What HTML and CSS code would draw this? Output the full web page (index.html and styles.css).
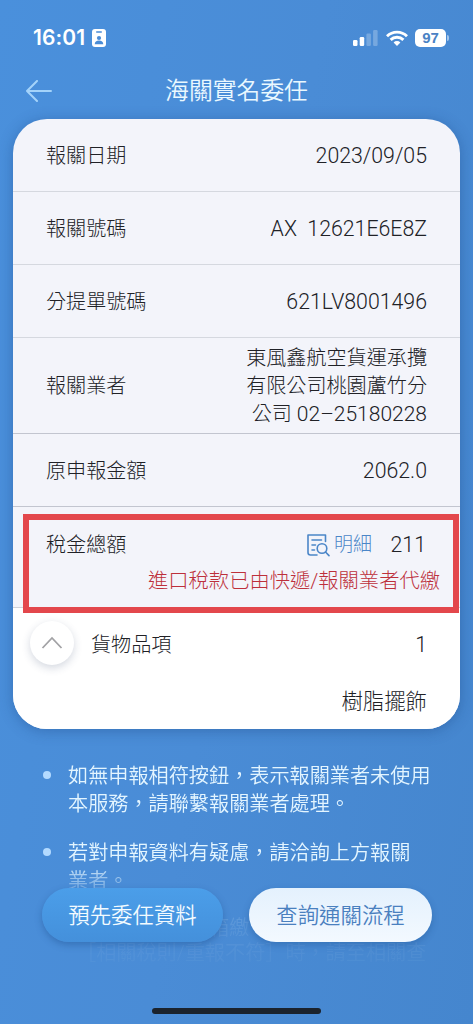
FILE: index.html
```html
<!DOCTYPE html>
<html lang="zh-Hant">
<head>
<meta charset="utf-8">
<meta name="viewport" content="width=device-width, initial-scale=1">
<title>海關實名委任</title>
<link rel="stylesheet" href="styles.css">
</head>
<body>
<main class="screen">
  <div class="status">
    <div class="status-left">
      <span class="time">16:01</span>
      <svg class="badge-icon" width="14" height="18" viewBox="0 0 14 18">
        <rect width="14" height="18" rx="3" fill="#fff"/>
        <rect x="4" y="2.2" width="6" height="1.5" rx=".7" fill="#4a8cd6"/>
        <circle cx="7" cy="9" r="2.1" fill="#4a8cd6"/>
        <path d="M2.7 15.3c.2-2.6 1.7-3.7 4.3-3.7s4.100 1.100 4.300 3.700z" fill="#4a8cd6"/>
      </svg>
    </div>
    <div class="status-right">
      <svg width="26" height="18" viewBox="0 0 26 18" fill="#fff">
        <rect x="0" y="11" width="4.500" height="6" rx="1.200"/>
        <rect x="6.700" y="8" width="4.500" height="9" rx="1.200"/>
        <rect x="13.400" y="4.500" width="4.500" height="12.500" rx="1.200" opacity=".25"/>
        <rect x="20.100" y="1" width="4.500" height="16" rx="1.200" opacity=".25"/>
      </svg>
      <svg width="22" height="18" viewBox="0 0 22 18" fill="none" stroke="#fff" stroke-width="2.900">
        <path d="M1 7.200a14.200 14.200 0 0 1 20 0"/>
        <path d="M4.600 10.900a9.100 9.100 0 0 1 12.800 0"/>
        <path d="M11 17l-3.400-3.500a4.800 4.800 0 0 1 6.800 0z" fill="#fff" stroke="none"/>
      </svg>
      <div class="battery"><span class="battery-level">97</span><span class="battery-tip"></span></div>
    </div>
  </div>

  <header class="nav">
    <svg width="26" height="22" viewBox="0 0 26 22" fill="none" stroke="#a4d3fa" stroke-width="2" stroke-linecap="round" stroke-linejoin="round">
      <path d="M25 11H1M11 1L1 11l10 10"/>
    </svg>
    <h1 class="title">海關實名委任</h1>
  </header>

  <section class="card">
    <div class="row"><span>報關日期</span><span class="value">2023/09/05</span></div>
    <div class="row"><span>報關號碼</span><span class="value spaced">AX  12621E6E8Z</span></div>
    <div class="row"><span>分提單號碼</span><span class="value">621LV8001496</span></div>
    <div class="row tall"><span>報關業者</span><span class="value company">東風鑫航空貨運承攬<br>有限公司桃園蘆竹分<br>公司 <span class="phone">02–25180228</span></span></div>
    <div class="row"><span>原申報金額</span><span class="value">2062.0</span></div>
    <div class="tax">
      <div class="tax-line">
        <span>稅金總額</span>
        <a class="detail">
          <svg width="23" height="23" viewBox="0 0 23 23" fill="none" stroke="#4b86c8" stroke-width="1.600" stroke-linecap="round" stroke-linejoin="round">
            <path d="M10 21H3.500Q1 21 1 18.500V1H18.500V7.500"/>
            <path d="M5 6H14.500M5 11H8.500M5 16H7.500"/>
            <circle cx="15" cy="14.500" r="4.800"/>
            <path d="M18.500 18L22 21.600"/>
          </svg>
          <span>明細</span>
        </a>
        <span class="value amount">211</span>
      </div>
      <p class="tax-note">進口稅款已由快遞/報關業者代繳</p>
      <div class="highlight"></div>
    </div>
    <div class="items">
      <div class="items-head">
        <button class="toggle" aria-label="收合">
          <svg width="22" height="13" viewBox="0 0 22 13" fill="none" stroke="#a2a2a5" stroke-width="1.800"><path d="M1.500 12L11 2l9.500 10"/></svg>
        </button>
        <span class="items-label">貨物品項</span>
        <span class="value count">1</span>
      </div>
      <div class="item-name">樹脂擺飾</div>
    </div>
  </section>

  <ul class="notes">
    <li>如無申報相符按鈕，表示報關業者未使用<br>本服務，請聯繫報關業者處理。</li>
    <li>若對申報資料有疑慮，請洽詢上方報關<br>業者。</li>
    <li class="last"><span class="tail">箱繳</span><span>［相關稅則/重報不符］時，請至相關查</span></li>
  </ul>

  <footer class="actions">
    <button class="btn btn-blue">預先委任資料</button>
    <button class="btn btn-light">查詢通關流程</button>
  </footer>
  <div class="home-bar"></div>
</main>
</body>
</html>
```
FILE: styles.css
```css
* { box-sizing: border-box; }
body { margin: 0; }

.screen {
  position: relative;
  display: flex;
  flex-direction: column;
  width: 473px;
  height: 1024px;
  overflow: hidden;
  background: linear-gradient(100deg, #4a90dc 0%, #4a8cd6 50%, #4586ce 100%);
  color: #202126;
  font-family: Roboto, "Noto Sans CJK TC", sans-serif;
  font-size: 20.1px;
  font-weight: 300;
  line-height: 28px;
}

button {
  border: 0;
  padding: 0;
  font: inherit;
}

.status {
  display: flex;
  justify-content: space-between;
  height: 67px;
  padding: 28px 24px 0 33px;
  color: #fff;
}
.status-left,
.status-right { display: flex; align-items: center; height: 19px; }
.time { font: 600 21px/19px Inter, sans-serif; letter-spacing: 0.1px; }
.badge-icon { margin-left: 7px; }
.status-right { gap: 7px; }
.battery { display: flex; align-items: center; gap: 1px; }
.battery-level {
  width: 31px;
  height: 18px;
  border-radius: 5px;
  background: #fff;
  color: #4a82c4;
  font: 700 15px/18px "Liberation Sans", sans-serif;
  text-align: center;
}
.battery-tip { width: 2px; height: 6px; border-radius: 0 2px 2px 0; background: #a5c6eb; }

.nav {
  display: grid;
  grid-template-columns: 26px 1fr 26px;
  align-items: center;
  height: 52px;
  padding: 0 26px 4px;
}
.title {
  margin: 0;
  color: #eaf8ff;
  font-size: 23.8px;
  font-weight: 350;
  text-align: center;
}

.card {
  height: 610px;
  margin: 0 13px;
  border-radius: 34px;
  background: #f3f4fa;
  box-shadow: 0 2px 14px rgba(20, 60, 120, .35);
}
.row {
  display: flex;
  align-items: center;
  justify-content: space-between;
  height: 73px;
  padding: 1px 33px 0;
  border-bottom: 1px solid #d5d8df;
}
.row.tall { height: 96px; border-color: #c2c5cf; }
.row.tall + .row { border-color: #c2c5cf; }
.value { font-size: 21.3px; text-align: right; }
.spaced { white-space: pre; }
.value.company { font-size: 20.1px; }
.phone { font-size: 21px; }

.tax {
  position: relative;
  height: 101px;
  padding: 22px 20px 0 33px;
  border-bottom: 1px solid #d0d3da;
}
.tax-line { display: flex; align-items: center; height: 32px; }
.detail {
  display: flex;
  align-items: center;
  gap: 4px;
  margin-left: auto;
  color: #4b86c8;
  font-size: 19px;
}
.amount { width: 54px; margin-right: 14px; }
.tax-note { margin: 6px 0 0; color: #bd303b; font-size: 20.3px; text-align: right; white-space: nowrap; }
.highlight {
  position: absolute;
  top: 7px;
  left: 10px;
  width: 436px;
  height: 99px;
  border: 6px solid #e3474c;
}

.items {
  height: 121px;
  padding: 12px 33px 0 17px;
  border-radius: 0 0 34px 34px;
  background: #fff;
}
.items-head { display: flex; align-items: center; height: 45px; }
.toggle {
  display: grid;
  place-items: center;
  width: 44px;
  height: 44px;
  margin-right: 17px;
  border-radius: 50%;
  background: #fff;
  box-shadow: 0 3px 9px rgba(40, 60, 100, .2);
}
.items-label,
.count { padding-top: 4px; }
.count { margin-left: auto; }
.item-name { margin-top: 23px; font-size: 21.4px; text-align: right; }

.notes {
  height: 240px;
  margin: 0;
  padding: 33px 0 0 68px;
  list-style: none;
  color: #e3f5ff;
  font-size: 20.15px;
  font-weight: 350;
  white-space: nowrap;
  -webkit-mask-image: linear-gradient(#000 136px, rgba(0, 0, 0, .5) 149px, rgba(0, 0, 0, .25) 163px, rgba(0, 0, 0, .09) 200px, rgba(0, 0, 0, .03) 240px);
  mask-image: linear-gradient(#000 136px, rgba(0, 0, 0, .5) 149px, rgba(0, 0, 0, .25) 163px, rgba(0, 0, 0, .09) 200px, rgba(0, 0, 0, .03) 240px);
}
.notes li {
  display: grid;
  position: relative;
  margin-bottom: 21px;
}
.notes li:not(.last)::before {
  content: "";
  position: absolute;
  top: 9px;
  left: -25px;
  width: 8px;
  height: 8px;
  border-radius: 50%;
  background: #b3daff;
}
.notes .last { padding-left: 8px; line-height: 25px; }
.tail { padding-left: 133px; }

.actions {
  position: absolute;
  top: 888px;
  left: 42px;
  display: flex;
  gap: 26px;
}
.btn {
  height: 54px;
  padding-top: 1px;
  border-radius: 27px;
  font-size: 21.4px;
}
.btn-blue {
  width: 181px;
  background: linear-gradient(#4b9ee9, #4490db);
  color: #f3fbff;
  font-weight: 350;
  box-shadow: 0 3px 7px rgba(20, 65, 125, .35);
}
.btn-light {
  width: 183px;
  background: linear-gradient(#e4f1fd, #f3f9ff);
  color: #4a80bf;
  font-weight: 350;
  box-shadow: 0 3px 7px rgba(20, 65, 125, .3);
}
.home-bar {
  position: absolute;
  left: 152px;
  bottom: 10px;
  width: 169px;
  height: 6px;
  border-radius: 3px;
  background: #1b232d;
}
```
